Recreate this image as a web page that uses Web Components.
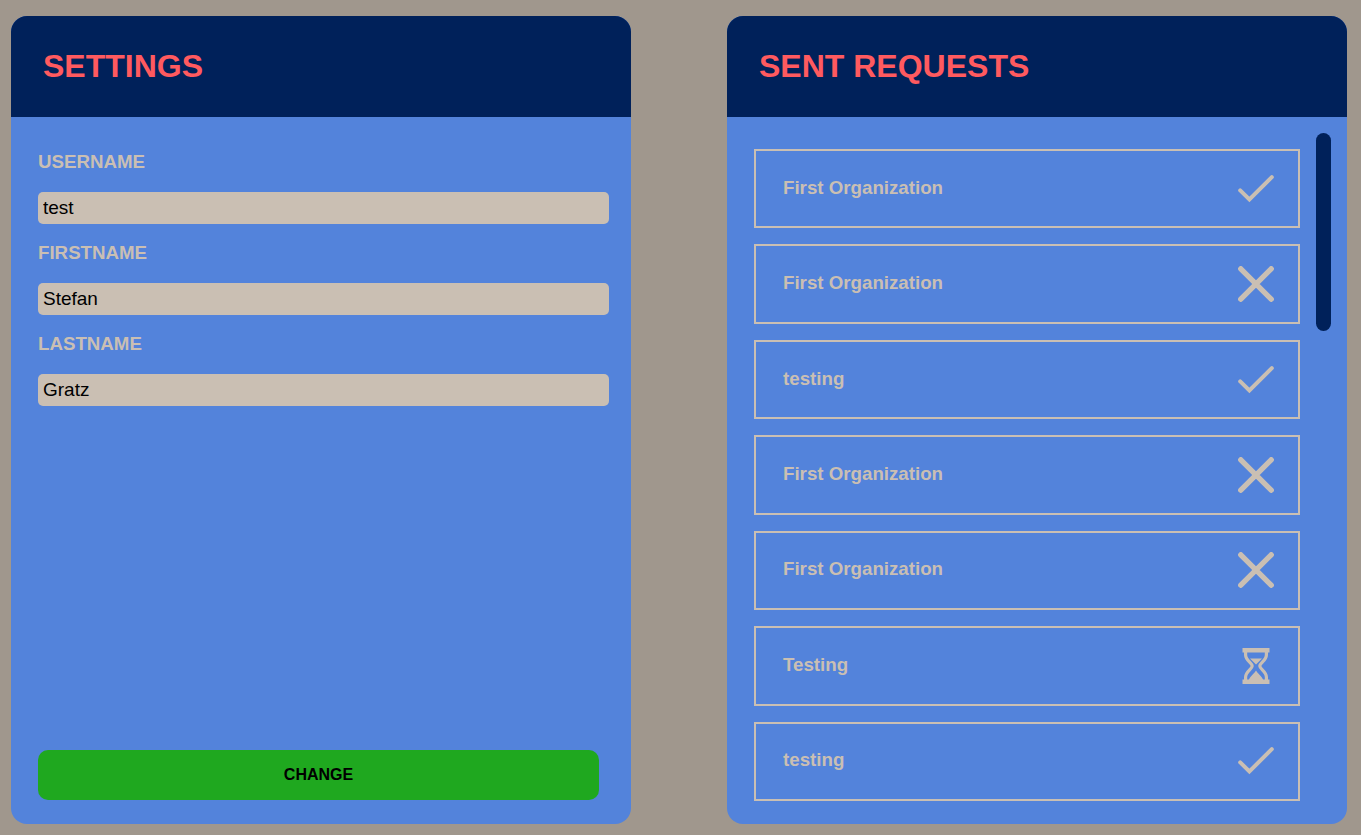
<!DOCTYPE html>
<html lang="en">
<head>
<meta charset="utf-8">
<title>Settings</title>
<style>
  body {
    margin: 0;
    background: #a0978d;
    font-family: "Liberation Sans", Arial, sans-serif;
    --navy: #00215a;
    --blue: #5383db;
    --sand: #cabfb3;
    --coral: #ff5a5f;
    --green: #1fa81f;
  }
</style>
</head>
<body>
<settings-page></settings-page>

<script>
const define = (name, html, setup) => {
  const template = document.createElement('template');
  template.innerHTML = html;
  customElements.define(name, class extends HTMLElement {
    constructor() {
      super();
      this.attachShadow({ mode: 'open' }).append(template.content.cloneNode(true));
    }
    connectedCallback() {
      if (setup) setup(this, this.shadowRoot);
    }
  });
};

const ICONS = {
  accepted: '<path d="M2.2 19.4 11.4 28.4 33.8 6.2" fill="none" stroke="currentColor" stroke-width="4" stroke-linecap="round"/>',
  rejected: '<path d="M2.8 2.8 33.2 33.2M33.2 2.8 2.8 33.2" fill="none" stroke="currentColor" stroke-width="5.4" stroke-linecap="round"/>',
  pending: '<path d="M4.5 0H31.5V4.4H4.5ZM4.5 31.6H31.5V36H4.5Z" fill="currentColor"/>' +
    '<path d="M7.6 3V7C7.6 12.5 14.2 15 14.2 18S7.6 23.5 7.6 29V33M28.4 3V7C28.4 12.5 21.8 15 21.8 18S28.4 23.5 28.4 29V33" fill="none" stroke="currentColor" stroke-width="3.2"/>' +
    '<path d="M12 10.5H24L18 16.5ZM18 22.5C19.5 25.5 24 28 25.5 32.5H10.5C12 28 16.5 25.5 18 22.5Z" fill="currentColor"/>'
};

define('status-icon', `
  <style>
    :host { display: block; width: 36px; height: 36px; flex: none; color: var(--sand); }
    svg { display: block; width: 100%; height: 100%; }
  </style>
  <svg viewBox="0 0 36 36" role="img"></svg>
`, (host, root) => {
  const svg = root.querySelector('svg');
  svg.innerHTML = ICONS[host.getAttribute('status')];
  svg.setAttribute('aria-label', host.getAttribute('status'));
});

define('panel-card', `
  <style>
    :host {
      display: flex; flex-direction: column; min-width: 0;
      border-radius: 16px; overflow: hidden; background: var(--blue);
    }
    header { background: var(--navy); padding: 32px; }
    h1 { margin: 0; font-size: 32px; line-height: 37px; color: var(--coral); }
    .body { flex: 1; display: flex; flex-direction: column; }
  </style>
  <header><h1><slot name="title"></slot></h1></header>
  <div class="body"><slot></slot></div>
`);

define('text-field', `
  <style>
    :host { display: block; }
    h3 { margin: 0 0 18px; line-height: 24px; color: var(--sand); }
    input {
      display: block; box-sizing: border-box; width: 100%; height: 32px;
      padding: 0 5px; border: 0; border-radius: 5px;
      background: var(--sand); color: #000;
      font: 19px "Liberation Sans", Arial, sans-serif;
    }
  </style>
  <h3><label for="field"></label></h3>
  <input id="field" type="text">
`, (host, root) => {
  root.querySelector('label').textContent = host.getAttribute('label');
  root.querySelector('input').value = host.getAttribute('value');
});

define('settings-form', `
  <style>
    :host { flex: 1; display: flex; }
    form {
      flex: 1; display: flex; flex-direction: column; gap: 17px;
      padding: 33px 22px 24px 27px;
    }
    button {
      margin: auto 10px 0 0; height: 50px; padding: 0;
      border: 0; border-radius: 10px; background: var(--green); color: #000;
      font: bold 16px "Liberation Sans", Arial, sans-serif;
    }
  </style>
  <form>
    <text-field label="USERNAME" value="test"></text-field>
    <text-field label="FIRSTNAME" value="Stefan"></text-field>
    <text-field label="LASTNAME" value="Gratz"></text-field>
    <button type="button">CHANGE</button>
  </form>
`);

define('request-item', `
  <style>
    :host {
      display: flex; align-items: center; justify-content: space-between;
      padding: 16px 24px 16px 27px; border: 2px solid var(--sand);
    }
    h3 { margin: 0; padding-bottom: 2px; line-height: 22px; color: var(--sand); }
  </style>
  <h3><slot></slot></h3>
`, (host, root) => {
  const icon = document.createElement('status-icon');
  icon.setAttribute('status', host.getAttribute('status'));
  root.append(icon);
});

define('request-list', `
  <style>
    :host { flex: 1; display: flex; gap: 16px; padding: 16px 16px 23px 27px; }
    .items { flex: 1; display: grid; grid-auto-rows: 1fr; gap: 16px; padding-top: 16px; }
    .thumb { width: 15px; height: 198px; border-radius: 8px; background: var(--navy); }
  </style>
  <div class="items">
    <request-item status="accepted">First Organization</request-item>
    <request-item status="rejected">First Organization</request-item>
    <request-item status="accepted">testing</request-item>
    <request-item status="rejected">First Organization</request-item>
    <request-item status="rejected">First Organization</request-item>
    <request-item status="pending">Testing</request-item>
    <request-item status="accepted">testing</request-item>
  </div>
  <div class="thumb"></div>
`);

define('settings-page', `
  <style>
    :host {
      display: grid; grid-template-columns: 1fr 1fr; gap: 96px;
      box-sizing: border-box; min-height: 100vh; padding: 16px 14px 11px 11px;
    }
  </style>
  <panel-card><span slot="title">SETTINGS</span><settings-form></settings-form></panel-card>
  <panel-card><span slot="title">SENT REQUESTS</span><request-list></request-list></panel-card>
`);
</script>
</body>
</html>
